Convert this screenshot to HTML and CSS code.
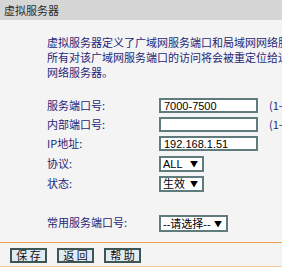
FILE: index.html
```html
<!DOCTYPE html>
<html lang="zh-CN">
<head>
    <meta charset="UTF-8">
    <title>虚拟服务器</title>
    <link rel="stylesheet" href="styles.css">
</head>
<body>
    <div class="title">虚拟服务器</div>

    <div class="content">
        <p class="intro">虚拟服务器定义了广域网服务端口和局域网网络服务器之间的映射关系，<br>所有对该广域网服务端口的访问将会被重定位给通过IP地址指定的局域网<br>网络服务器。</p>

        <div class="form">
            <div class="row h19">
                <span class="label">服务端口号:</span>
                <input class="txt" type="text" value="7000-7500">
                <span class="hint">(1-65535)</span>
            </div>
            <div class="row h19">
                <span class="label">内部端口号:</span>
                <input class="txt" type="text" value="">
                <span class="hint">(1-65535)</span>
            </div>
            <div class="row h20">
                <span class="label">IP地址:</span>
                <input class="txt" type="text" value="192.168.1.51">
            </div>
            <div class="row h20">
                <span class="label">协议:</span>
                <div class="sel w45"><span>ALL</span><span class="arrow">▼</span></div>
            </div>
            <div class="row h20">
                <span class="label">状态:</span>
                <div class="sel w45"><span>生效</span><span class="arrow">▼</span></div>
            </div>
            <div class="row common">
                <span class="label">常用服务端口号:</span>
                <div class="sel w69 tall"><span>--请选择--</span><span class="arrow">▼</span></div>
            </div>
        </div>
    </div>

    <div class="btnbar">
        <button class="btn">保 存</button>
        <button class="btn">返 回</button>
        <button class="btn">帮 助</button>
    </div>
</body>
</html>
```

FILE: styles.css
```css
html, body {
    margin: 0;
    padding: 0;
    overflow: hidden;
}
body {
    width: 600px;
    background-color: #f4f4f4;
    font-family: "Noto Sans CJK SC", "Liberation Sans", sans-serif;
    font-size: 11px;
    color: #1f1f78;
}
.title {
    height: 20px;
    line-height: 20px;
    padding-left: 4px;
    background-color: #d6d6d6;
    color: #2a2a2a;
}
.content {
    padding-top: 15px;
}
.intro {
    margin: 0 0 18px 0;
    padding-left: 47px;
    line-height: 15px;
    white-space: nowrap;
}
.row {
    display: flex;
    align-items: flex-start;
}
.h19 { height: 19px; }
.h20 { height: 20px; }
.common {
    margin-top: 19px;
    height: 27px;
}
.label {
    width: 112px;
    padding-left: 47px;
    line-height: 15px;
    white-space: nowrap;
}
.txt {
    box-sizing: border-box;
    width: 99px;
    height: 15px;
    margin: 0;
    padding: 0 3px;
    border: 2px solid #5f7b7b;
    background: #fff;
    font-family: "Liberation Sans", Arial, sans-serif;
    font-size: 11px;
    color: #000;
}
.hint {
    margin-left: 11px;
    line-height: 15px;
}
.sel {
    box-sizing: border-box;
    display: flex;
    justify-content: space-between;
    align-items: center;
    height: 16px;
    padding: 0 4px 0 2px;
    border: 2px solid #5f7b7b;
    background: #fff;
    color: #000;
    font-size: 11px;
    line-height: 12px;
}
.sel span:first-child {
    font-family: "Liberation Sans", "Noto Sans CJK SC", sans-serif;
}
.w45 { width: 45px; }
.w69 { width: 69px; }
.tall { height: 17px; }
.arrow {
    font-size: 8px;
}
.btnbar {
    display: flex;
    gap: 10px;
    padding: 5px 0 3px 10px;
    border-top: 1px solid #f0a04c;
    border-bottom: 1px solid #f8c898;
}
.btn {
    box-sizing: border-box;
    width: 37px;
    height: 15px;
    margin: 0;
    padding: 0;
    border: 2px solid #3c5656;
    background-color: #e2eaf3;
    color: #111;
    font-family: "Noto Sans CJK SC", sans-serif;
    font-size: 11px;
    line-height: 11px;
}
```
